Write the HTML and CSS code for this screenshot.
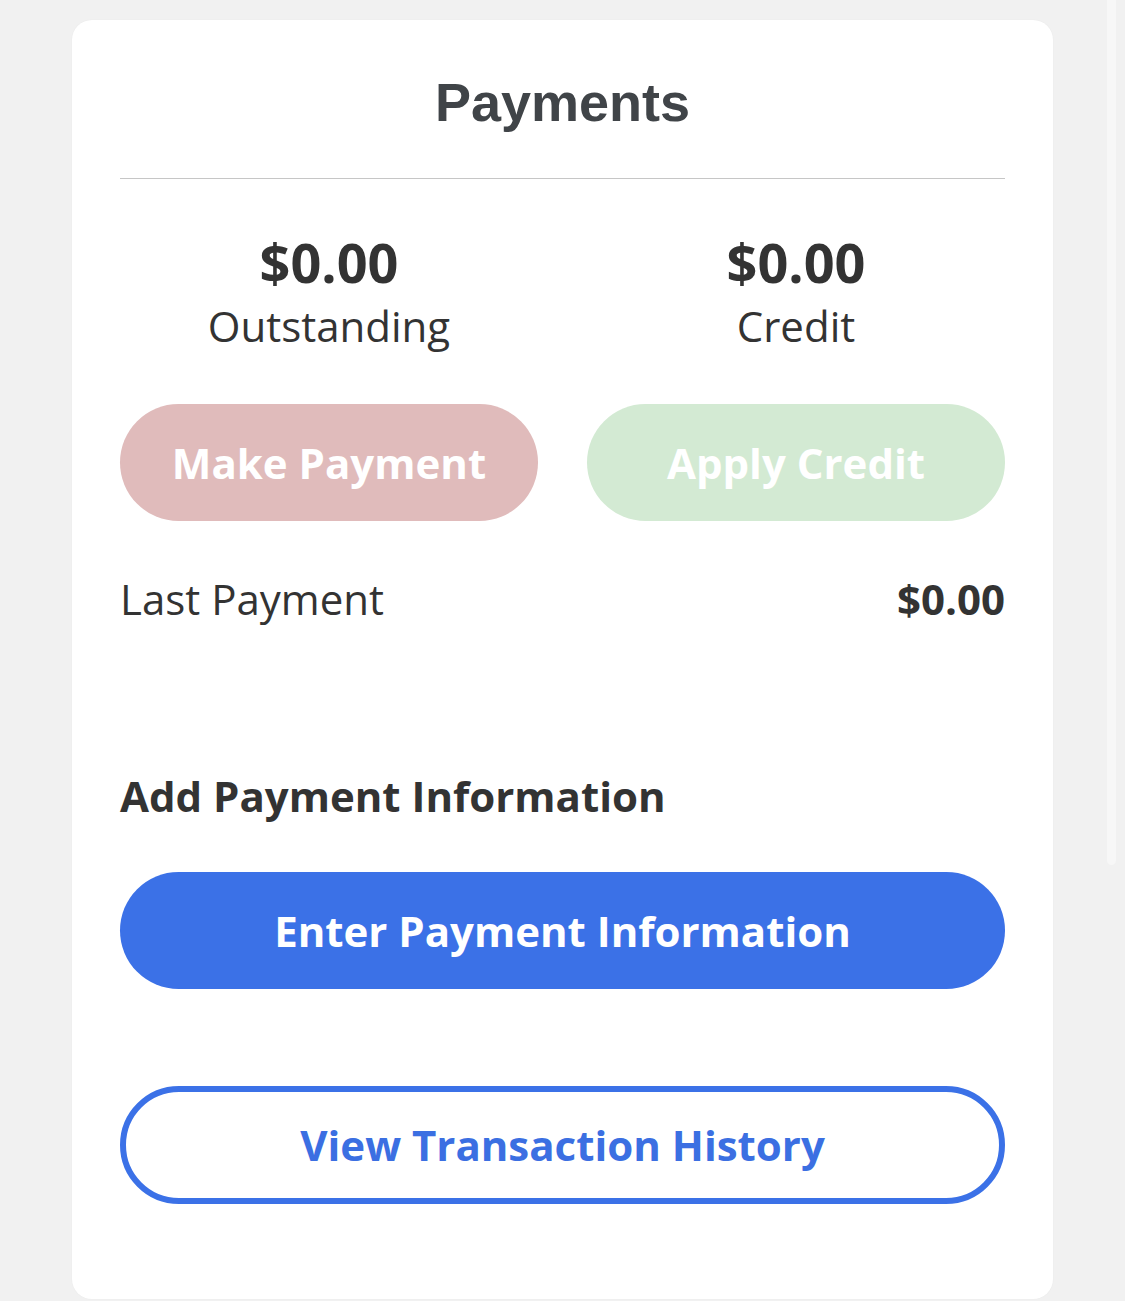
FILE: index.html
```html
<!DOCTYPE html>
<html lang="en">
<head>
<meta charset="utf-8">
<title>Payments</title>
<link rel="stylesheet" href="styles.css">
</head>
<body>
<div class="page">
  <main class="card">
    <h1 class="title">Payments</h1>
    <hr class="divider">
    <section class="stats">
      <div class="stat">
        <div class="amount">$0.00</div>
        <div class="label">Outstanding</div>
      </div>
      <div class="stat">
        <div class="amount">$0.00</div>
        <div class="label">Credit</div>
      </div>
      <button class="pill pill-pink" type="button">Make Payment</button>
      <button class="pill pill-green" type="button">Apply Credit</button>
    </section>
    <div class="last-row">
      <span class="last-label">Last Payment</span>
      <span class="last-value">$0.00</span>
    </div>
    <h2 class="section-title">Add Payment Information</h2>
    <button class="pill pill-blue" type="button">Enter Payment Information</button>
    <button class="pill pill-outline" type="button">View Transaction History</button>
  </main>
  <div class="scroll-strip"></div>
</div>
</body>
</html>
```

FILE: styles.css
```css
html, body {
  margin: 0;
  padding: 0;
}

body {
  background: #f1f1f1;
  font-family: "Open Sans", "Noto Sans", sans-serif;
  color: #333333;
  height: 1301px;
  overflow: hidden;
}

.page {
  display: flex;
  align-items: flex-start;
  padding-left: 72px;
}

.card {
  box-sizing: border-box;
  width: 981px;
  margin-top: 20px;
  background: #ffffff;
  border-radius: 20px;
  padding: 52px 48px 95px;
  display: flex;
  flex-direction: column;
  box-shadow: 0 0 2px rgba(0, 0, 0, 0.04);
}

.scroll-strip {
  width: 9px;
  height: 865px;
  margin-left: 54px;
  background: #f7f7f7;
  border-radius: 0 0 5px 5px;
}

.title {
  margin: 0;
  font-family: "Liberation Sans", Arial, sans-serif;
  font-weight: 700;
  font-size: 54px;
  line-height: 60px;
  color: #404448;
  text-align: center;
}

.divider {
  margin: 46px 0 0;
  border: 0;
  height: 1px;
  background: #c6c6c6;
}

.stats {
  display: grid;
  grid-template-columns: 1fr 1fr;
  column-gap: 49px;
  margin-top: 51px;
}

.stat {
  display: flex;
  flex-direction: column;
  align-items: center;
}

.amount {
  font-weight: 700;
  font-size: 54px;
  line-height: 64px;
  color: #333333;
}

.label {
  margin-top: 4px;
  font-size: 42px;
  line-height: 56px;
  color: #333333;
}

.pill {
  box-sizing: border-box;
  display: block;
  width: 100%;
  height: 117px;
  border: 0;
  border-radius: 59px;
  padding: 0;
  font-family: "Open Sans", "Noto Sans", sans-serif;
  font-weight: 700;
  font-size: 42px;
  line-height: 56px;
  color: #ffffff;
  text-align: center;
}

.stats .pill {
  margin-top: 50px;
}

.pill-pink {
  background: #e0bbbb;
}

.pill-green {
  background: #d3ead3;
}

.last-row {
  display: flex;
  justify-content: space-between;
  align-items: baseline;
  margin-top: 50px;
  font-size: 42px;
  line-height: 56px;
}

.last-value {
  font-weight: 700;
}

.section-title {
  margin: 141px 0 0;
  font-size: 42px;
  line-height: 56px;
  font-weight: 700;
  color: #333333;
}

.pill-blue {
  margin-top: 48px;
  background: #3b71e7;
}

.pill-outline {
  margin-top: 97px;
  height: 118px;
  background: #ffffff;
  border: 6px solid #3b71e7;
  color: #3b6fe2;
}
```
